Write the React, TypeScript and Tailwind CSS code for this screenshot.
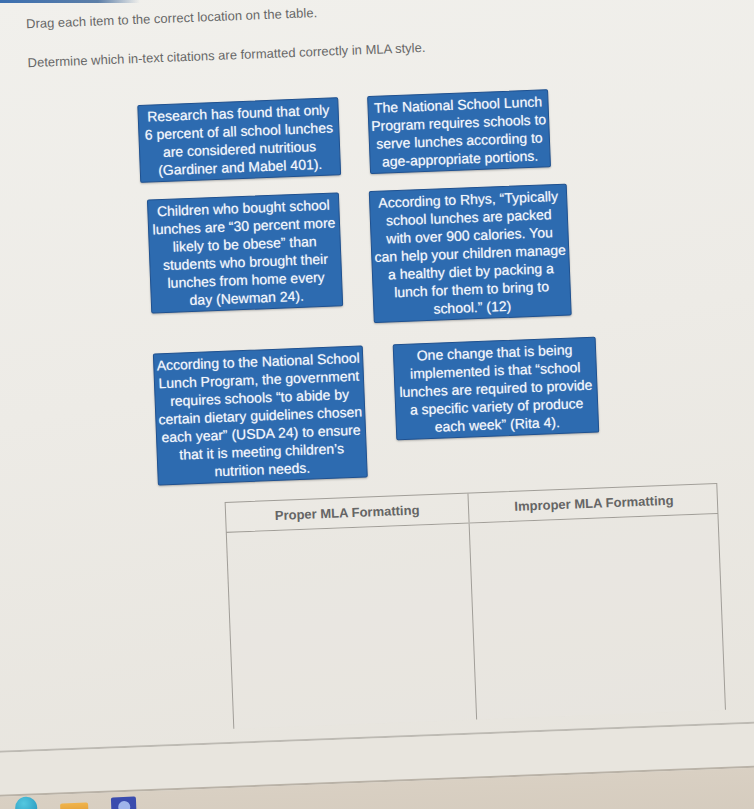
import React from 'react';

type Tile = {
  id: string;
  width: string;
  lines: string[];
};

// Draggable citation tiles, two per row
const rows: { className: string; tiles: Tile[] }[] = [
  {
    className: 'mt-[39px] ml-[149px] gap-[29px]',
    tiles: [
      {
        id: 'gardiner',
        width: 'w-[201px]',
        lines: [
          'Research has found that only',
          '6 percent of all school lunches',
          'are considered nutritious',
          '(Gardiner and Mabel 401).',
        ],
      },
      {
        id: 'nslp',
        width: 'w-[181px]',
        lines: [
          'The National School Lunch',
          'Program requires schools to',
          'serve lunches according to',
          'age-appropriate portions.',
        ],
      },
    ],
  },
  {
    className: 'mt-[17px] ml-[155px] gap-[30px]',
    tiles: [
      {
        id: 'newman',
        width: 'w-[192px]',
        lines: [
          'Children who bought school',
          'lunches are \u201c30 percent more',
          'likely to be obese\u201d than',
          'students who brought their',
          'lunches from home every',
          'day (Newman 24).',
        ],
      },
      {
        id: 'rhys',
        width: 'w-[198px]',
        lines: [
          'According to Rhys, \u201cTypically',
          'school lunches are packed',
          'with over 900 calories. You',
          'can help your children manage',
          'a healthy diet by packing a',
          'lunch for them to bring to',
          'school.\u201d (12)',
        ],
      },
    ],
  },
  {
    className: 'mt-[22px] ml-[155px] gap-[30px]',
    tiles: [
      {
        id: 'usda',
        width: 'w-[210px]',
        lines: [
          'According to the National School',
          'Lunch Program, the government',
          'requires schools \u201cto abide by',
          'certain dietary guidelines chosen',
          'each year\u201d (USDA 24) to ensure',
          'that it is meeting children\u2019s',
          'nutrition needs.',
        ],
      },
      {
        id: 'rita',
        width: 'w-[203px]',
        lines: [
          'One change that is being',
          'implemented is that \u201cschool',
          'lunches are required to provide',
          'a specific variety of produce',
          'each week\u201d (Rita 4).',
        ],
      },
    ],
  },
];

function CitationTile({ tile }: { tile: Tile }) {
  return (
    <div
      className={`${tile.width} whitespace-pre-line rounded-[2px] border border-[#1f5190] bg-[#2d6bb0] py-[2px] text-center text-[14px] leading-[18px] text-[#f3f6fb] shadow-[0_1px_2px_rgba(0,0,0,0.25)] [text-shadow:0_0_1px_rgba(255,255,255,0.6)]`}
    >
      {tile.lines.join('\n')}
    </div>
  );
}

function TaskbarIcons() {
  return (
    <div className="flex items-start gap-[23px] pl-[40px] pt-[8px]">
      <div className="-mt-[7px] h-[22px] w-[22px] rounded-full bg-[radial-gradient(circle_at_40%_30%,#55c8e0,#1f8fb8)]" />
      <div className="mt-[1px] h-[18px] w-[28px] rounded-[2px] bg-[linear-gradient(180deg,#f0b44c,#d98d26)]" />
      <div className="-mt-[3px] flex h-[26px] w-[25px] items-start justify-center rounded-[2px] bg-[#3a4cae] pt-[4px]">
        <div className="h-[12px] w-[12px] rounded-full bg-[#9fb4ea]" />
      </div>
    </div>
  );
}

export default function App() {
  return (
    <div
      className="relative h-[809px] w-[754px] overflow-hidden bg-[linear-gradient(170deg,#f1f0ec_0%,#edebe6_45%,#e6e3dc_100%)]"
      style={{ fontFamily: '"Liberation Sans", Arial, sans-serif' }}
    >
      {/* app header edge */}
      <div className="h-[3px] w-[140px] bg-[linear-gradient(90deg,#3b6fb0,#5d7fa8_70%,transparent)]" />

      <div className="w-[754px] rotate-[-2.2deg] origin-[377px_402px]">
        {/* instructions */}
        <div className="pl-[41px] text-[13px] leading-[15px] text-[#676767]">
          <p>Drag each item to the correct location on the table.</p>
          <p className="mt-[24px]">Determine which in-text citations are formatted correctly in MLA style.</p>
        </div>

        {/* tile bank */}
        {rows.map((row, i) => (
          <div key={i} className={`flex items-start ${row.className}`}>
            {row.tiles.map((tile) => (
              <CitationTile key={tile.id} tile={tile} />
            ))}
          </div>
        ))}

        {/* drop table */}
        <div className="ml-[221px] mt-[19px] w-[493px]">
          <div className="grid h-[31px] grid-cols-[243px_250px] border border-[#a19e98] text-[13px] font-bold text-[#656565]">
            <div className="flex items-center justify-center border-r border-[#a19e98]">Proper MLA Formatting</div>
            <div className="flex items-center justify-center">Improper MLA Formatting</div>
          </div>
          <div className="grid h-[196px] grid-cols-[243px_250px] border-x border-[#a19e98] bg-[#e9e6e0]/40">
            <div className="border-r border-[#a19e98]" />
            <div />
          </div>
        </div>

        {/* page bottom, screen edge and taskbar */}
        <div className="-mx-[40px] mt-[13px]">
          <div className="h-[2px] bg-[#bdbab3]" />
          <div className="h-[42px] bg-[#e8e5de]" />
          <div className="h-[2px] bg-[#b9b2a7]" />
          <div className="h-[80px] bg-[linear-gradient(180deg,#d9d0c3,#d2c8ba)]">
            <TaskbarIcons />
          </div>
        </div>
      </div>
    </div>
  );
}
